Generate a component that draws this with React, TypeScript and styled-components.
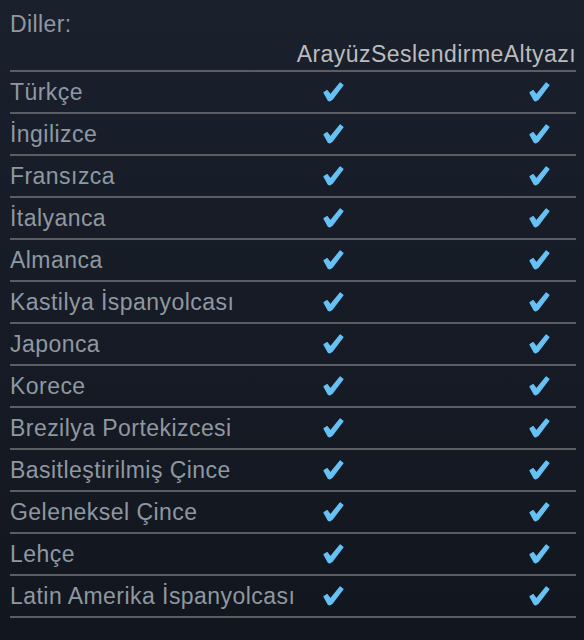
import React from "react";
import styled, { createGlobalStyle } from "styled-components";

const GlobalStyle = createGlobalStyle`
  html, body {
    margin: 0;
    padding: 0;
    height: 100%;
  }
  body {
    background: linear-gradient(to bottom, #1a202c 0%, #151a24 60%, #12161e 100%);
    font-family: "Liberation Sans", Arial, Helvetica, sans-serif;
  }
`;

const Wrapper = styled.div`
  padding: 10px 0 0 10px;
  width: 566px;
`;

const Title = styled.div`
  color: #8f98a0;
  font-size: 23px;
  letter-spacing: 0.4px;
  line-height: 28px;
  margin-bottom: 2px;
`;

const Table = styled.table`
  width: 566px;
  border-collapse: collapse;
  border-spacing: 0;
  font-size: 23px;
  letter-spacing: 0.45px;
`;

const HeadCell = styled.th<{ $first?: boolean }>`
  color: #bcbcbc;
  font-weight: normal;
  line-height: 28px;
  padding: 0 0 2px 0;
  text-align: ${(p) => (p.$first ? "left" : "center")};
  width: ${(p) => (p.$first ? "auto" : "1px")};
  white-space: nowrap;
  border-bottom: 2px solid #5b5d62;
`;

const Row = styled.tr`
  border-bottom: 2px solid #5b5d62;
`;

const NameCell = styled.td`
  color: #8f98a0;
  line-height: 36px;
  padding: 2px 0 2px 0;
  white-space: nowrap;
`;

const CheckCell = styled.td`
  text-align: center;
  vertical-align: middle;
  padding: 0 0 2px 0;
`;

const Check = () => (
  <svg width="21" height="20" viewBox="0 0 21 20" style={{ display: "inline-block", verticalAlign: "middle" }}>
    <path
      d="M1 10.6 L4.2 8.6 L7.4 12.8 L17.2 1 L20 3.2 L9 17.6 L6.6 19 L5.2 18.2 Z"
      fill="#67c1f5"
      stroke="#67c1f5"
      strokeWidth="1.2"
      strokeLinejoin="round"
    />
  </svg>
);

const languages = [
  "Türkçe",
  "İngilizce",
  "Fransızca",
  "İtalyanca",
  "Almanca",
  "Kastilya İspanyolcası",
  "Japonca",
  "Korece",
  "Brezilya Portekizcesi",
  "Basitleştirilmiş Çince",
  "Geleneksel Çince",
  "Lehçe",
  "Latin Amerika İspanyolcası",
];

export default function App() {
  return (
    <>
      <GlobalStyle />
      <Wrapper>
        <Title>Diller:</Title>
        <Table>
          <thead>
            <tr>
              <HeadCell $first></HeadCell>
              <HeadCell>Arayüz</HeadCell>
              <HeadCell>Seslendirme</HeadCell>
              <HeadCell>Altyazı</HeadCell>
            </tr>
          </thead>
          <tbody>
            {languages.map((lang) => (
              <Row key={lang}>
                <NameCell>{lang}</NameCell>
                <CheckCell>
                  <Check />
                </CheckCell>
                <CheckCell></CheckCell>
                <CheckCell>
                  <Check />
                </CheckCell>
              </Row>
            ))}
          </tbody>
        </Table>
      </Wrapper>
    </>
  );
}
